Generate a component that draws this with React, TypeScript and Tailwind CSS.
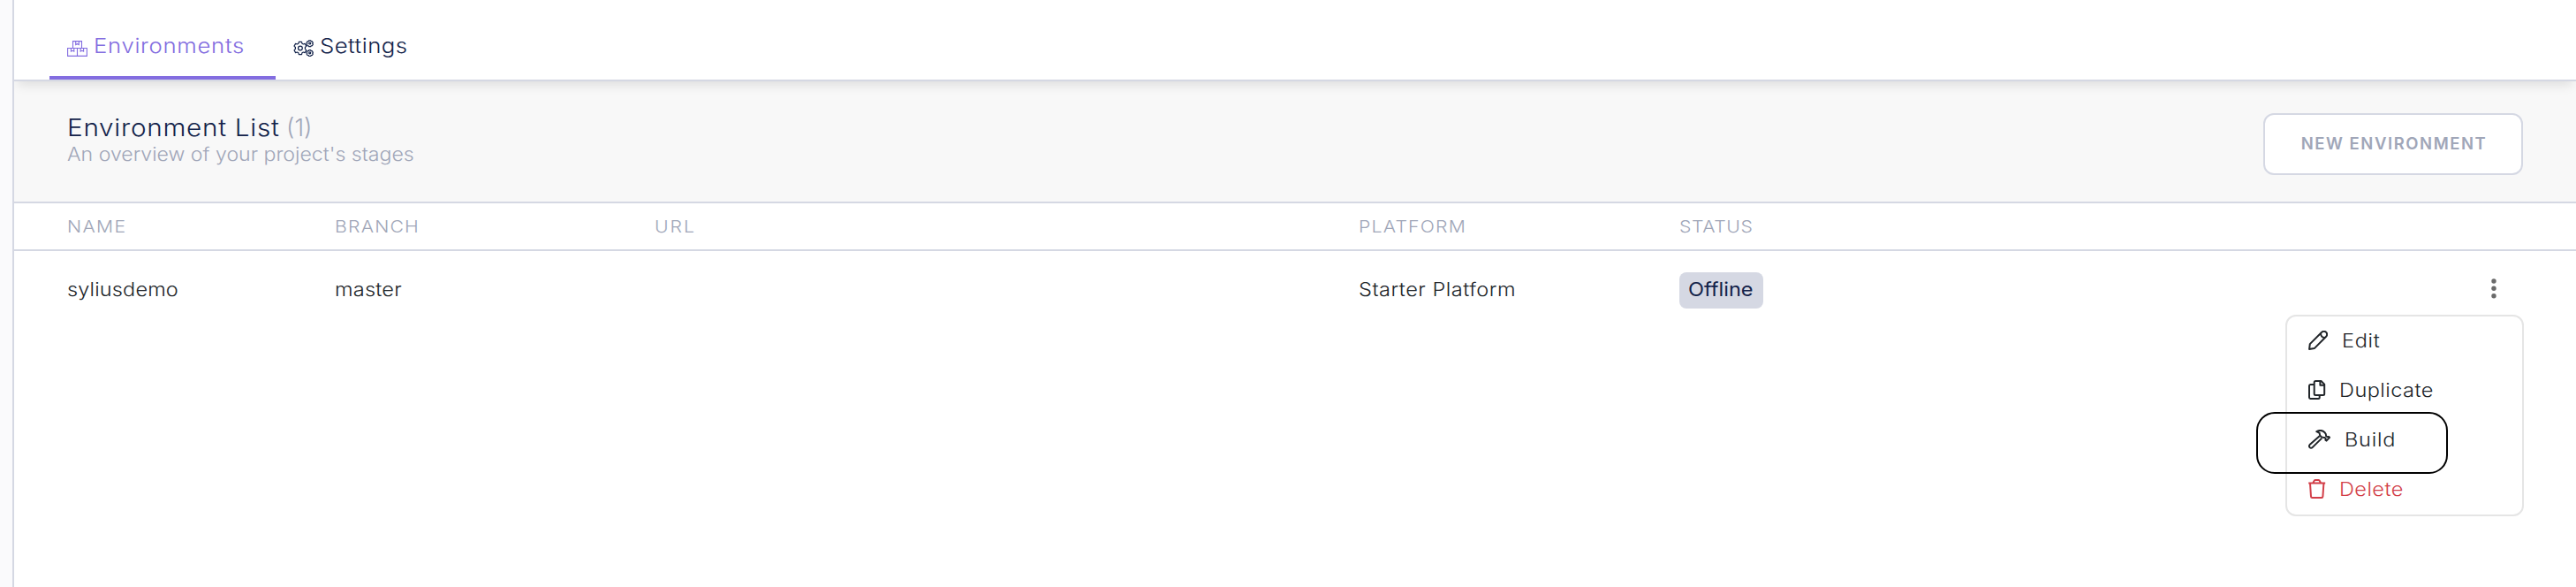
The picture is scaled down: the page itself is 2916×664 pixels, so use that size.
import type { ReactNode } from 'react';
import clsx from 'clsx';

function BoxesIcon() {
  return (
    <svg width="23" height="18" viewBox="0 0 23 18" fill="none" stroke="currentColor" strokeWidth="1.1">
      <path d="M6.5 8.5V.6h10v7.9M.6 8.5h21.8v8.9H.6zM11.5 8.5v8.9" />
      <path d="M9.7.6v4l1.8-.9 1.8.9v-4M4.4 8.5v3.6l1.7-.8 1.7.8V8.5M15.2 8.5v3.6l1.7-.8 1.7.8V8.5" />
    </svg>
  );
}

function GearsIcon() {
  return (
    <svg width="23" height="19" viewBox="0 0 23 19" fill="none" stroke="currentColor" strokeWidth="1.2" strokeLinejoin="round">
      <circle cx="7.9" cy="9.5" r="2.4" />
      <path d="M6.3 2.4h3.2l.5 1.9 1.3.7 1.9-.6 1.6 2.7-1.4 1.4v1.9l1.4 1.4-1.6 2.8-1.9-.6-1.3.7-.5 1.9H6.3l-.5-1.9-1.3-.7-1.9.6L1 11.8l1.4-1.4V8.5L1 7.1l1.6-2.7 1.9.6 1.3-.7z" />
      <circle cx="18.7" cy="4" r="1" />
      <path d="M17.7.9h2l.5.9 1.2.1.9 1.6-.6.8.6.9-.9 1.5-1.2.1-.5.9h-2l-.5-.9-1.2-.1-.9-1.5.6-.9-.6-.8.9-1.6 1.2-.1z" />
      <circle cx="18.7" cy="14.8" r="1" />
      <path d="M17.7 11.7h2l.5.9 1.2.1.9 1.6-.6.8.6.9-.9 1.5-1.2.1-.5.9h-2l-.5-.9-1.2-.1-.9-1.5.6-.9-.6-.8.9-1.6 1.2-.1z" />
    </svg>
  );
}

function PencilIcon() {
  return (
    <svg width="22" height="22" viewBox="0 0 22 22" fill="none" stroke="currentColor" strokeWidth="2" strokeLinejoin="round">
      <path d="M1.1 20.9l.7-5.8L15.2 1.8a3.4 3.4 0 0 1 4.9 0 3.4 3.4 0 0 1 0 4.9L6.8 20.1z" />
      <path d="M14 3c-.2 3 1.8 5 4.9 4.9" />
    </svg>
  );
}

function CopyIcon() {
  return (
    <svg width="20" height="22" viewBox="0 0 20 22" fill="none" stroke="currentColor" strokeWidth="2" strokeLinejoin="round">
      <path d="M8.2 1h6.3L18.2 4.7v10.8a1.5 1.5 0 0 1-1.5 1.5H8.2a1.5 1.5 0 0 1-1.5-1.5V2.5A1.5 1.5 0 0 1 8.2 1z" />
      <path d="M13.4 1v4.700h4.800" />
      <path d="M6.7 5H2.4A1.5 1.5 0 0 0 1 6.5v13A1.5 1.5 0 0 0 2.4 21h8.8a1.5 1.5 0 0 0 1.5-1.500V17" />
    </svg>
  );
}

function HammerIcon() {
  return (
    <svg width="25" height="22" viewBox="0 0 25 22" fill="none" stroke="currentColor" strokeWidth="2" strokeLinejoin="round">
      <path d="M12.7 7.3L1.6 17.1a2.1 2.1 0 0 0 0 3 2.1 2.1 0 0 0 3 0L15.3 9.6" />
      <path d="M9.3 2.1c3.2-1.7 6.7-1.5 9.3 1.1 1.2 1.2 1.6 2.500 1.5 4l1.5 1.1 1.6-.4.9 1-3.6 3.700-1.100-.9.3-1.600-1.200-1.200c-2 .2-3.100-.2-4.300-1.200-1.300-1.300-1.600-2.500-1.500-3.900z" />
    </svg>
  );
}

function TrashIcon() {
  return (
    <svg width="20" height="22" viewBox="0 0 20 22" fill="none" stroke="currentColor" strokeWidth="2" strokeLinejoin="round">
      <path d="M.2 4.6h19M5.3 4.500l1.200-2.500A1.500 1.500 0 0 1 7.800 1.100h3.800A1.500 1.500 0 0 1 12.900 2l1.200 2.500" />
      <path d="M2 4.700l1 14.900a1.500 1.500 0 0 0 1.500 1.400h10.400a1.500 1.500 0 0 0 1.500-1.400l1-14.900" />
    </svg>
  );
}

function Wide({ className, children }: { className?: string; children: ReactNode }) {
  return <span className={clsx('inline-block origin-left scale-x-110 whitespace-nowrap', className)}>{children}</span>;
}

const columns = [
  { label: 'NAME', tracking: 'tracking-[1.2px]' },
  { label: 'BRANCH', tracking: 'tracking-[1.1px]' },
  { label: 'URL', tracking: 'tracking-[1.8px]' },
  { label: 'PLATFORM', tracking: 'tracking-[1.1px]' },
  { label: 'STATUS', tracking: 'tracking-[0.5px]' },
];

const actions = [
  { label: 'Edit', icon: <PencilIcon />, gap: 'gap-[15.5px]', tracking: 'tracking-[0.6px]' },
  { label: 'Duplicate', icon: <CopyIcon />, gap: 'gap-[15px]', tracking: 'tracking-[0.42px]' },
  { label: 'Build', icon: <HammerIcon />, gap: 'gap-[15.5px]', tracking: 'tracking-[0.7px]' },
  { label: 'Delete', icon: <TrashIcon />, gap: 'gap-[15px]', tracking: 'tracking-[0.4px]', danger: true },
];

export default function App() {
  return (
    <div className="flex h-[664px] w-full overflow-hidden bg-white font-['Inter',sans-serif] font-light text-[#212529]">
      <aside className="w-4 shrink-0 border-r-2 border-[#d5d8e3] bg-[#fafafc]" />
      <main className="flex min-w-0 flex-1 flex-col overflow-hidden">
        <nav className="relative z-10 flex h-[92px] shrink-0 border-b-2 border-[#d5d8e3] bg-white pl-10 text-[23.4px] leading-8 shadow-[0_8px_12px_-4px_rgba(0,0,0,0.11)]">
          <a className="flex w-64 border-b-4 border-[#836de0] pt-9 pl-5 text-[#836de0]">
            <span className="mt-2.5 mr-[7px] h-[18px]"><BoxesIcon /></span>
            <Wide className="tracking-[0.62px]">Environments</Wide>
          </a>
          <a className="flex pt-9 pl-5 text-[#13234a]">
            <span className="mt-[9px] mr-[7px] h-[19px]"><GearsIcon /></span>
            <Wide className="tracking-[0.4px]">Settings</Wide>
          </a>
        </nav>

        <header className="flex h-[138px] shrink-0 items-start justify-between border-b-2 border-[#d5d8e3] bg-[#f8f8f8] pt-9 pr-[60px] pl-[60px]">
          <div>
            <h1 className="flex h-[34px] text-[27px] leading-[34px] text-[#13234a]">
              <Wide className="w-[248px] tracking-[0.65px]">Environment List</Wide>
              <span className="text-[#a0a6b8]">(1)</span>
            </h1>
            <p className="origin-left scale-x-[1.08] text-[21.4px] leading-[25px] text-[#a0a6b8]">An overview of your project's stages</p>
          </div>
          <button className="flex h-[70px] w-[294px] items-center justify-center rounded-xl border-2 border-[#d5d8e3] bg-white pb-px pl-0.5 text-[18.5px] font-semibold tracking-[1.55px] text-[#a0a6b8]">
            NEW ENVIRONMENT
          </button>
        </header>

        <div className="grid h-[54px] shrink-0 grid-cols-[303px_362px_797px_363px_1fr] items-center border-b-2 border-[#d5d8e3] pl-[60px] text-[19.3px] text-[#a0a6b8]">
          {columns.map((c) => (
            <div key={c.label}><Wide className={c.tracking}>{c.label}</Wide></div>
          ))}
        </div>

        <div className="relative grid h-[88px] shrink-0 grid-cols-[303px_362px_797px_363px_1fr_94px] items-center pl-[60px] text-[21.4px]">
          <div className="pb-0.5"><Wide className="tracking-[0.12px]">syliusdemo</Wide></div>
          <div className="pb-0.5"><Wide className="tracking-[0.2px]">master</Wide></div>
          <div />
          <div className="pb-0.5"><Wide className="tracking-[0.47px]">Starter Platform</Wide></div>
          <div>
            <span className="mt-px flex h-[41px] w-[95px] items-center rounded-lg bg-[#d5d8e3] pb-0.5 pl-2.5 font-normal text-[#13234a]">
              <Wide>Offline</Wide>
            </span>
          </div>
          <div />
          <div className="absolute top-[30px] right-[90px] text-[#6b6b6b]">
            <svg width="6" height="24" viewBox="0 0 6 24" fill="currentColor">
              <circle cx="3" cy="4" r="2.7" />
              <circle cx="3" cy="12.3" r="2.7" />
              <circle cx="3" cy="20.7" r="2.7" />
            </svg>
          </div>
          <ul className="absolute top-[72px] right-[59px] h-[228px] w-[270px] rounded-xl border-2 border-[#e5e5e5] bg-white">
            {actions.map((a) => (
              <li key={a.label} className={clsx('flex h-14 pt-4 pl-6 leading-6', a.gap, a.danger && 'text-[#d23f49]')}>
                <span className="h-[22px] shrink-0">{a.icon}</span>
                <Wide className={clsx('-mt-px', a.tracking)}>{a.label}</Wide>
              </li>
            ))}
          </ul>
          <div className="absolute top-[182px] right-[145px] h-[70px] w-[217px] rounded-[21px] border-2 border-black" />
        </div>
      </main>
    </div>
  );
}
